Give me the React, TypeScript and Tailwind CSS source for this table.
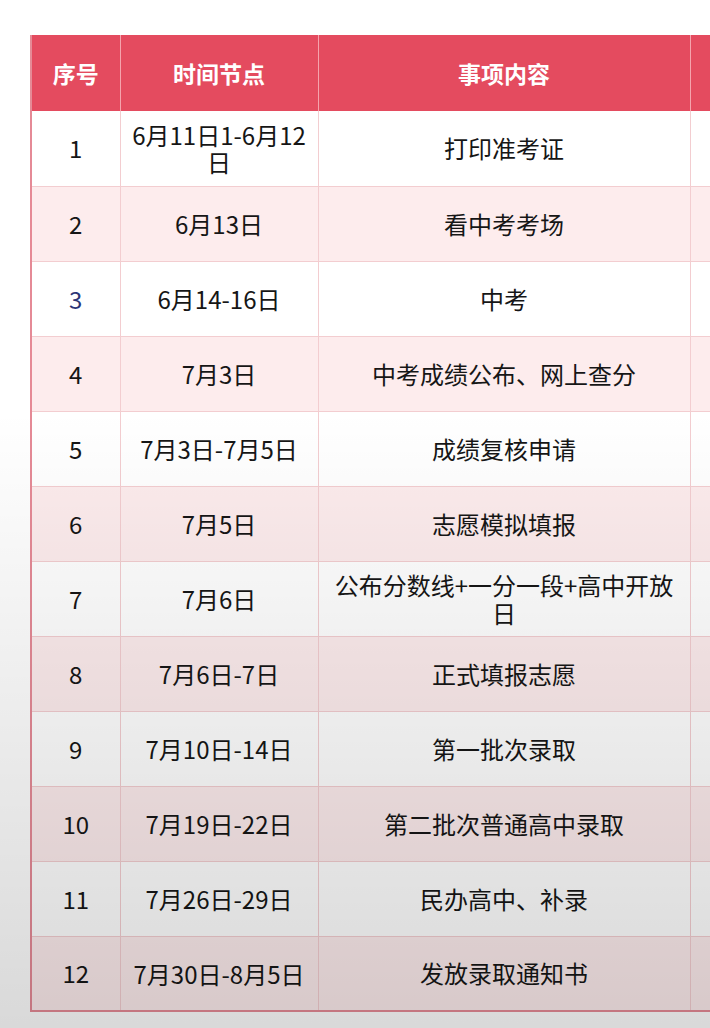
const rows: [string, string, string][] = [
  ["1", "6月11日1-6月12日", "打印准考证"],
  ["2", "6月13日", "看中考考场"],
  ["3", "6月14-16日", "中考"],
  ["4", "7月3日", "中考成绩公布、网上查分"],
  ["5", "7月3日-7月5日", "成绩复核申请"],
  ["6", "7月5日", "志愿模拟填报"],
  ["7", "7月6日", "公布分数线+一分一段+高中开放日"],
  ["8", "7月6日-7日", "正式填报志愿"],
  ["9", "7月10日-14日", "第一批次录取"],
  ["10", "7月19日-22日", "第二批次普通高中录取"],
  ["11", "7月26日-29日", "民办高中、补录"],
  ["12", "7月30日-8月5日", "发放录取通知书"],
]

export default function App() {
  return (
    <div className="relative w-[710px] h-[1028px] overflow-hidden bg-white pt-[35px] pl-[30px] font-['Noto_Sans_CJK_SC','Noto_Sans',sans-serif]">
      <table className="table-fixed border-collapse w-[760px] border-l-2 border-b-2 border-[#e58a96] text-[24px] text-[#161616]">
        <colgroup>
          <col className="w-[89px]" />
          <col className="w-[198px]" />
          <col className="w-[372px]" />
          <col className="w-[101px]" />
        </colgroup>
        <thead>
          <tr className="h-[76px] bg-[#e44b5f] text-white font-bold text-[23px]">
            <th className="border-r border-[#f5a3ad]">序号</th>
            <th className="border-r border-[#f5a3ad]">时间节点</th>
            <th className="border-r border-[#f5a3ad]">事项内容</th>
            <th></th>
          </tr>
        </thead>
        <tbody>
          {rows.map(([n, date, item], i) => (
            <tr
              key={n}
              className={`h-[75px] ${i % 2 === 0 ? "bg-white" : "bg-[#fdeced]"}`}
            >
              <td className={`border-r border-b border-[#f3cdd0] text-center ${n === "3" ? "text-[#2b3576]" : ""}`}>{n}</td>
              <td className="border-r border-b border-[#f3cdd0] text-center px-1.5 leading-[27px]">{date}</td>
              <td className="border-r border-b border-[#f3cdd0] text-center px-2 leading-[28px]">{item}</td>
              <td className="border-b border-[#f3cdd0]"></td>
            </tr>
          ))}
        </tbody>
      </table>
      <div className="pointer-events-none absolute inset-0 bg-gradient-to-b from-transparent via-transparent via-40% to-black/15" />
    </div>
  )
}
